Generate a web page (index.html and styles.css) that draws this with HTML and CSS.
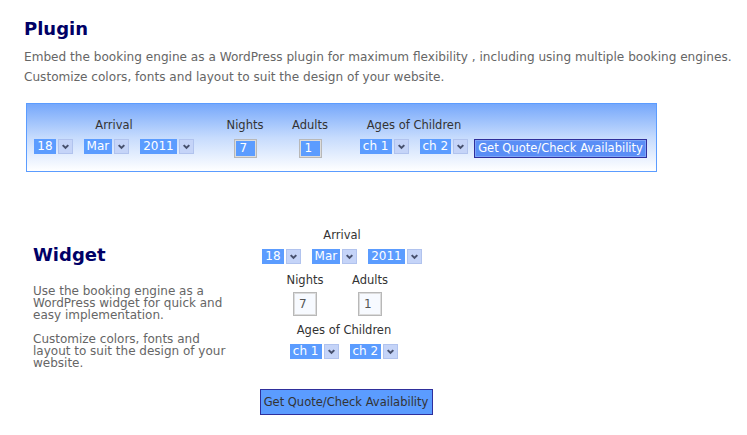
FILE: index.html
```html
<!DOCTYPE html>
<html>
<head>
<meta charset="utf-8">
<link rel="stylesheet" href="styles.css">
</head>
<body>
<section class="plugin">
  <h2 class="title">Plugin</h2>
  <p class="lead">Embed the booking engine as a WordPress plugin for maximum flexibility , including using multiple booking engines.<br>Customize colors, fonts and layout to suit the design of your website.</p>
  <div class="bar">
    <div class="cell c-arrival">
      <span class="lbl">Arrival</span>
      <div class="ctrls">
        <span class="sel"><span class="val">18</span><span class="arr"><svg viewBox="0 0 14 14"><polyline points="4,5.5 7,8.5 10,5.5"/></svg></span></span>
        <span class="sel"><span class="val">Mar</span><span class="arr"><svg viewBox="0 0 14 14"><polyline points="4,5.5 7,8.5 10,5.5"/></svg></span></span>
        <span class="sel"><span class="val">2011</span><span class="arr"><svg viewBox="0 0 14 14"><polyline points="4,5.5 7,8.5 10,5.5"/></svg></span></span>
      </div>
    </div>
    <div class="cell c-nights">
      <span class="lbl">Nights</span>
      <span class="inp blue">7</span>
    </div>
    <div class="cell c-adults">
      <span class="lbl">Adults</span>
      <span class="inp blue">1</span>
    </div>
    <div class="cell c-ages">
      <span class="lbl">Ages of Children</span>
      <div class="ctrls">
        <span class="sel"><span class="val">ch 1</span><span class="arr"><svg viewBox="0 0 14 14"><polyline points="4,5.5 7,8.5 10,5.5"/></svg></span></span>
        <span class="sel"><span class="val">ch 2</span><span class="arr"><svg viewBox="0 0 14 14"><polyline points="4,5.5 7,8.5 10,5.5"/></svg></span></span>
      </div>
    </div>
    <div class="cell c-btn">
      <span class="btn btn-plugin">Get Quote/Check Availability</span>
    </div>
  </div>
</section>

<section class="widget">
  <div class="widget-text">
    <h2 class="title">Widget</h2>
    <p class="wp">Use the booking engine as a WordPress widget for quick and easy implementation.</p>
    <p class="wp">Customize colors, fonts and layout to suit the design of your website.</p>
  </div>
  <div class="widget-form">
    <span class="lbl">Arrival</span>
    <div class="ctrls w-date">
      <span class="sel"><span class="val">18</span><span class="arr"><svg viewBox="0 0 14 14"><polyline points="4,5.5 7,8.5 10,5.5"/></svg></span></span>
      <span class="sel"><span class="val">Mar</span><span class="arr"><svg viewBox="0 0 14 14"><polyline points="4,5.5 7,8.5 10,5.5"/></svg></span></span>
      <span class="sel"><span class="val">2011</span><span class="arr"><svg viewBox="0 0 14 14"><polyline points="4,5.5 7,8.5 10,5.5"/></svg></span></span>
    </div>
    <div class="w-pair">
      <div class="w-cell">
        <span class="lbl">Nights</span>
        <span class="inp white">7</span>
      </div>
      <div class="w-cell">
        <span class="lbl">Adults</span>
        <span class="inp white">1</span>
      </div>
    </div>
    <span class="lbl w-ages">Ages of Children</span>
    <div class="ctrls w-ch">
      <span class="sel"><span class="val">ch 1</span><span class="arr"><svg viewBox="0 0 14 14"><polyline points="4,5.5 7,8.5 10,5.5"/></svg></span></span>
      <span class="sel"><span class="val">ch 2</span><span class="arr"><svg viewBox="0 0 14 14"><polyline points="4,5.5 7,8.5 10,5.5"/></svg></span></span>
    </div>
    <span class="btn btn-widget">Get Quote/Check Availability</span>
  </div>
</section>
</body>
</html>
```
FILE: styles.css
```css
html, body {
  margin: 0;
  padding: 0;
  background: #ffffff;
}
body {
  font-family: "DejaVu Sans", Verdana, sans-serif;
  color: #333;
  width: 747px;
}
.title {
  margin: 0;
  font-size: 18px;
  line-height: 22px;
  font-weight: bold;
  color: #000066;
}
.plugin {
  padding: 18px 0 0 24px;
}
.lead {
  margin: 7px 0 0 0;
  font-size: 12.1px;
  line-height: 20px;
  color: #666;
  white-space: nowrap;
}
.bar {
  margin: 16px 0 0 2px;
  width: 621px;
  border: 1px solid #5b9cff;
  background: linear-gradient(to bottom, #76a8fb 0%, #c6dbfd 50%, #ffffff 100%);
  padding: 14px 0 13px 8px;
  display: flex;
  align-items: flex-start;
  box-sizing: content-box;
}
.cell {
  display: flex;
  flex-direction: column;
  align-items: center;
  gap: 7px;
}
.c-arrival { width: 158px; }
.c-nights { width: 50px; margin-left: 27px; }
.c-adults { width: 50px; margin-left: 15px; }
.c-ages { width: 106px; margin-left: 26px; }
.c-btn { margin-left: 7px; padding-top: 21px; }
.lbl {
  display: block;
  font-size: 11.5px;
  line-height: 14px;
  color: #333;
  white-space: nowrap;
}
.ctrls {
  display: flex;
  gap: 11px;
  align-items: center;
}
.sel {
  display: inline-flex;
  align-items: center;
  gap: 2px;
}
.val {
  display: block;
  background: #5b9cff;
  color: #fff;
  font-size: 12px;
  line-height: 15px;
  height: 15px;
  padding: 0 3px;
  white-space: nowrap;
}
.arr {
  display: block;
  width: 13px;
  height: 13px;
  background: #c5d4f8;
  border: 1px solid #b1c3ee;
}
.arr svg {
  display: block;
  width: 13px;
  height: 13px;
}
.arr polyline {
  fill: none;
  stroke: #48516e;
  stroke-width: 2.2;
}
.inp {
  display: block;
  box-sizing: border-box;
  font-size: 12px;
  padding-left: 5px;
  border: 1px solid #b8b8b8;
  box-shadow: inset 0 0 0 1px #dcdcdc;
}
.inp.blue {
  width: 23px;
  height: 19px;
  line-height: 17px;
  background: #5b9cff;
  color: #fff;
}
.inp.white {
  width: 24px;
  height: 24px;
  line-height: 22px;
  background: #f7faff;
  color: #555;
}
.btn {
  display: block;
  box-sizing: border-box;
  width: 173px;
  font-size: 11.5px;
  text-align: center;
  border: 1px solid #2f2f9c;
  white-space: nowrap;
}
.btn-plugin {
  height: 19px;
  line-height: 17px;
  background: #5a8ef6;
  color: #fff;
  box-shadow: inset 0 0 0 1px #7ea6f8;
}
.widget {
  display: flex;
  margin-top: 56px;
  padding-left: 33px;
}
.widget-text {
  width: 200px;
  padding-top: 16px;
}
.wp {
  margin: 19px 0 0 0;
  font-size: 12px;
  line-height: 12px;
  color: #666;
}
.wp + .wp {
  margin-top: 12px;
}
.widget-form {
  width: 180px;
  margin-left: 19px;
  display: flex;
  flex-direction: column;
  align-items: center;
}
.w-date {
  margin-top: 7px;
}
.w-pair {
  display: flex;
  gap: 15px;
  margin-top: 9px;
  margin-right: 9px;
}
.w-cell {
  width: 50px;
  display: flex;
  flex-direction: column;
  align-items: center;
  gap: 5px;
}
.w-ages {
  margin-top: 7px;
  margin-left: 4px;
}
.w-ch {
  margin-top: 7px;
  margin-left: 4px;
}
.btn-widget {
  margin-top: 30px;
  margin-left: 8px;
  height: 26px;
  line-height: 24px;
  background: #5b9cff;
  color: #333;
}
```
